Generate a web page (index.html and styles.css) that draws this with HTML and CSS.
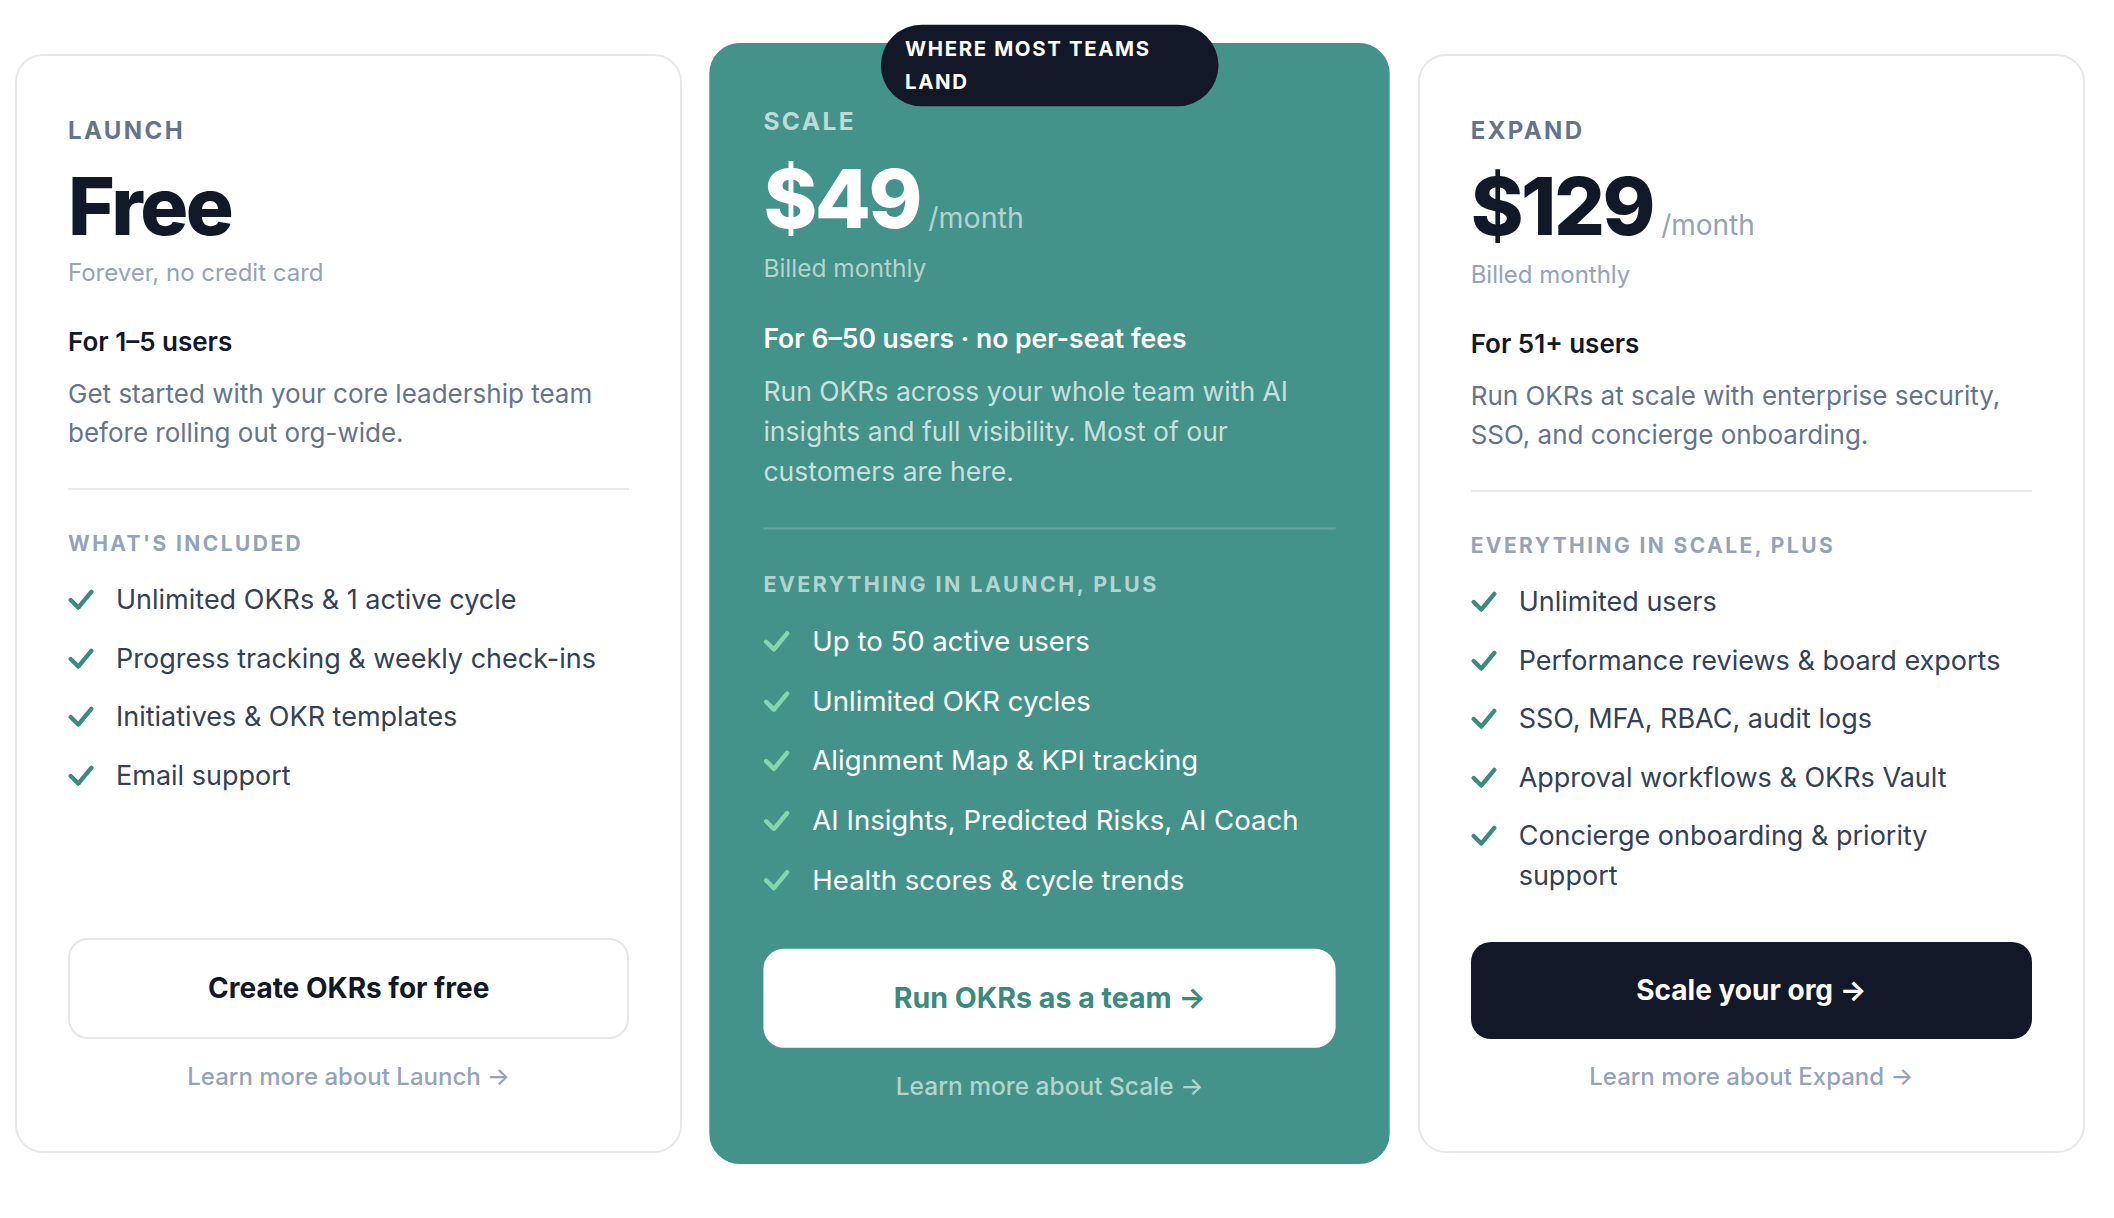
FILE: index.html
```html
<!DOCTYPE html>
<html lang="en">
<head>
<meta charset="utf-8">
<title>Pricing</title>
<link rel="stylesheet" href="styles.css">
</head>
<body>
<main class="pricing">
  <article class="plan">
    <div class="plan-tier">Launch</div>
    <div class="plan-price"><span class="plan-amount">Free</span></div>
    <p class="plan-billing">Forever, no credit card</p>
    <p class="plan-users">For 1–5 users</p>
    <p class="plan-desc">Get started with your core leadership team before rolling out org-wide.</p>
    <hr class="plan-divider">
    <div class="plan-includes">What's included</div>
    <ul class="plan-features">
      <li><svg class="check" viewBox="0 0 24 20"><path d="M2.5 10 L9.5 17 L21.5 2.5"/></svg><span>Unlimited OKRs &amp; 1 active cycle</span></li>
      <li><svg class="check" viewBox="0 0 24 20"><path d="M2.5 10 L9.5 17 L21.5 2.5"/></svg><span>Progress tracking &amp; weekly check-ins</span></li>
      <li><svg class="check" viewBox="0 0 24 20"><path d="M2.5 10 L9.5 17 L21.5 2.5"/></svg><span>Initiatives &amp; OKR templates</span></li>
      <li><svg class="check" viewBox="0 0 24 20"><path d="M2.5 10 L9.5 17 L21.5 2.5"/></svg><span>Email support</span></li>
    </ul>
    <a class="plan-cta cta-outline" href="#">Create OKRs for free</a>
    <a class="plan-more" href="#">Learn more about Launch →</a>
  </article>

  <article class="plan plan-featured">
    <div class="plan-badge">Where most teams land</div>
    <div class="plan-tier">Scale</div>
    <div class="plan-price"><span class="plan-amount">$49</span><span class="plan-period">/month</span></div>
    <p class="plan-billing">Billed monthly</p>
    <p class="plan-users">For 6–50 users · no per-seat fees</p>
    <p class="plan-desc">Run OKRs across your whole team with AI insights and full visibility. Most of our customers are here.</p>
    <hr class="plan-divider">
    <div class="plan-includes">Everything in Launch, plus</div>
    <ul class="plan-features">
      <li><svg class="check" viewBox="0 0 24 20"><path d="M2.5 10 L9.5 17 L21.5 2.5"/></svg><span>Up to 50 active users</span></li>
      <li><svg class="check" viewBox="0 0 24 20"><path d="M2.5 10 L9.5 17 L21.5 2.5"/></svg><span>Unlimited OKR cycles</span></li>
      <li><svg class="check" viewBox="0 0 24 20"><path d="M2.5 10 L9.5 17 L21.5 2.5"/></svg><span>Alignment Map &amp; KPI tracking</span></li>
      <li><svg class="check" viewBox="0 0 24 20"><path d="M2.5 10 L9.5 17 L21.5 2.5"/></svg><span>AI Insights, Predicted Risks, AI Coach</span></li>
      <li><svg class="check" viewBox="0 0 24 20"><path d="M2.5 10 L9.5 17 L21.5 2.5"/></svg><span>Health scores &amp; cycle trends</span></li>
    </ul>
    <a class="plan-cta cta-light" href="#">Run OKRs as a team →</a>
    <a class="plan-more" href="#">Learn more about Scale →</a>
  </article>

  <article class="plan">
    <div class="plan-tier">Expand</div>
    <div class="plan-price"><span class="plan-amount">$129</span><span class="plan-period">/month</span></div>
    <p class="plan-billing">Billed monthly</p>
    <p class="plan-users">For 51+ users</p>
    <p class="plan-desc">Run OKRs at scale with enterprise security, SSO, and concierge onboarding.</p>
    <hr class="plan-divider">
    <div class="plan-includes">Everything in Scale, plus</div>
    <ul class="plan-features">
      <li><svg class="check" viewBox="0 0 24 20"><path d="M2.5 10 L9.5 17 L21.5 2.5"/></svg><span>Unlimited users</span></li>
      <li><svg class="check" viewBox="0 0 24 20"><path d="M2.5 10 L9.5 17 L21.5 2.5"/></svg><span>Performance reviews &amp; board exports</span></li>
      <li><svg class="check" viewBox="0 0 24 20"><path d="M2.5 10 L9.5 17 L21.5 2.5"/></svg><span>SSO, MFA, RBAC, audit logs</span></li>
      <li><svg class="check" viewBox="0 0 24 20"><path d="M2.5 10 L9.5 17 L21.5 2.5"/></svg><span>Approval workflows &amp; OKRs Vault</span></li>
      <li><svg class="check" viewBox="0 0 24 20"><path d="M2.5 10 L9.5 17 L21.5 2.5"/></svg><span>Concierge onboarding &amp; priority support</span></li>
    </ul>
    <a class="plan-cta cta-dark" href="#">Scale your org →</a>
    <a class="plan-more" href="#">Learn more about Expand →</a>
  </article>
</main>
</body>
</html>
```

FILE: styles.css
```css
* { box-sizing: border-box; }

html, body {
  margin: 0;
  background: #ffffff;
}

body {
  font-family: Inter, "Noto Sans", "Liberation Sans", sans-serif;
  color: #111827;
}

.pricing {
  display: grid;
  grid-template-columns: repeat(3, 1fr);
  gap: 34px;
  padding: 54px 29px 40px 15px;
  align-items: stretch;
}

.plan {
  position: relative;
  display: flex;
  flex-direction: column;
  background: #ffffff;
  border: 2px solid #e7e8ee;
  border-radius: 28px;
  padding: 59px 51px 58px;
}

.plan-featured {
  background: #44938a;
  border-color: #44938a;
  border-radius: 30px;
  transform: scale(1.02);
  z-index: 1;
}

.plan-badge {
  position: absolute;
  top: -20px;
  left: 50%;
  transform: translateX(-50%);
  background: #131829;
  color: #ffffff;
  font-size: 20px;
  font-weight: 700;
  line-height: 32px;
  letter-spacing: 0.08em;
  text-transform: uppercase;
  padding: 8px 24px;
  border-radius: 40px;
}

.plan-tier {
  font-size: 24px;
  line-height: 32px;
  font-weight: 700;
  letter-spacing: 0.1em;
  text-transform: uppercase;
  color: #64748b;
}

.plan-price {
  display: flex;
  align-items: baseline;
  margin-top: 19px;
  min-height: 80px;
}

.plan-amount {
  font-size: 80px;
  line-height: 80px;
  font-weight: 800;
  letter-spacing: -0.03em;
  color: #111827;
}

.plan-period {
  margin-left: 8px;
  font-size: 28px;
  line-height: 46px;
  font-weight: 400;
  color: #94a3b8;
}

.plan-billing {
  margin: 11px 0 0;
  font-size: 24px;
  line-height: 32px;
  color: #94a3b8;
}

.plan-users {
  margin: 37px 0 0;
  font-size: 26px;
  line-height: 32px;
  font-weight: 600;
  color: #111827;
}

.plan-desc {
  margin: 16px 0 0;
  font-size: 26px;
  line-height: 39px;
  color: #64748b;
}

.plan-divider {
  margin: 36px 0 0;
  border: 0;
  height: 2px;
  background: #e8e9ee;
}

.plan-includes {
  margin-top: 40px;
  font-size: 21px;
  line-height: 28px;
  font-weight: 700;
  letter-spacing: 0.115em;
  text-transform: uppercase;
  color: #94a3b8;
}

.plan-features {
  list-style: none;
  margin: 22px 0 46px;
  padding: 0 14px 0 0;
  display: flex;
  flex-direction: column;
  gap: 18.5px;
}

.plan-features li {
  display: flex;
  align-items: flex-start;
  gap: 22px;
  font-size: 27px;
  line-height: 40px;
  color: #334155;
}

.check {
  flex: none;
  width: 26px;
  height: 22px;
  margin-top: 9px;
  fill: none;
  stroke: #3a8c7e;
  stroke-width: 4;
  stroke-linecap: round;
  stroke-linejoin: round;
}

.plan-cta {
  margin-top: auto;
  display: block;
  text-align: center;
  text-decoration: none;
  font-size: 28px;
  line-height: 33px;
  font-weight: 700;
  padding: 32px 24px;
  border-radius: 20px;
}

.cta-outline {
  border: 2px solid #e5e7eb;
  color: #111827;
  background: #ffffff;
}

.cta-light {
  background: #ffffff;
  color: #3a8a7d;
}

.cta-dark {
  background: #131829;
  color: #ffffff;
}

.plan-more {
  display: block;
  margin-top: 22px;
  text-align: center;
  text-decoration: none;
  font-size: 24px;
  line-height: 32px;
  font-weight: 500;
  color: #94a3b8;
}

/* featured (teal) card colours */
.plan-featured .plan-tier { color: rgba(255, 255, 255, 0.68); }
.plan-featured .plan-amount { color: #ffffff; }
.plan-featured .plan-period { color: rgba(255, 255, 255, 0.6); }
.plan-featured .plan-billing { color: rgba(255, 255, 255, 0.6); }
.plan-featured .plan-users { color: #ffffff; }
.plan-featured .plan-desc { color: rgba(255, 255, 255, 0.72); }
.plan-featured .plan-divider { background: rgba(255, 255, 255, 0.18); }
.plan-featured .plan-includes { color: rgba(255, 255, 255, 0.62); }
.plan-featured .plan-features li { color: #ffffff; }
.plan-featured .check { stroke: #86d6ac; }
.plan-featured .plan-more { color: rgba(255, 255, 255, 0.6); }
```
